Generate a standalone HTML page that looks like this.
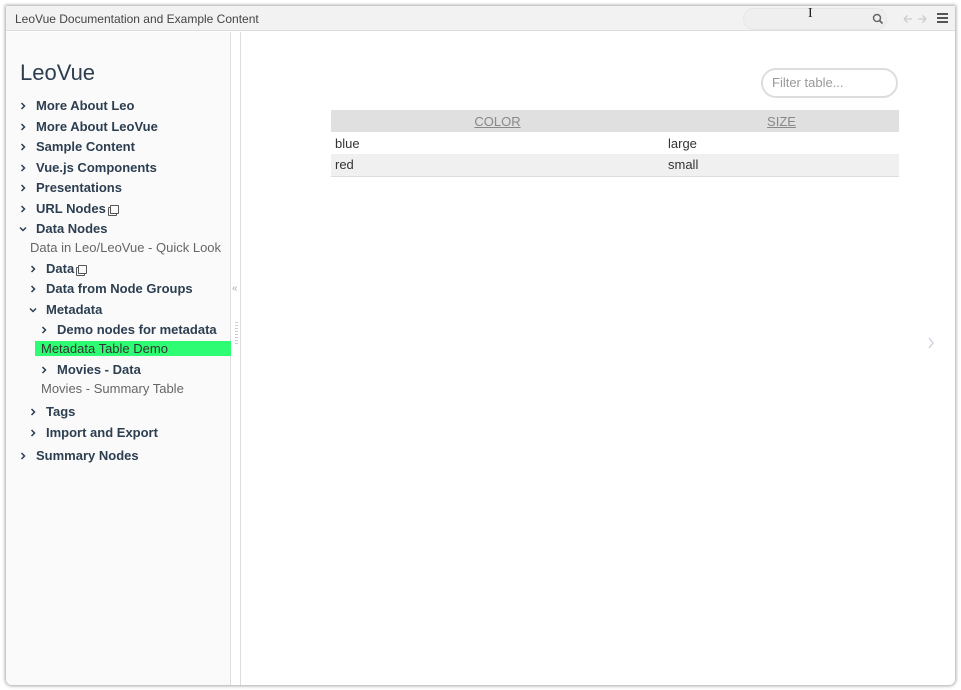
<!DOCTYPE html>
<html><head><meta charset="utf-8"><style>
*{margin:0;padding:0;box-sizing:border-box}
body{width:961px;height:690px;background:#fff;position:relative;overflow:hidden;font-family:"Liberation Sans",sans-serif}
.win{position:absolute;left:6px;top:6px;width:949px;height:679px;background:#fff;border-radius:0 0 6px 6px;box-shadow:0 0 3px 1px rgba(0,0,0,.35);overflow:hidden}
.bar{position:absolute;left:0;top:0;width:949px;height:25px;background:#f2f2f2;border-bottom:1px solid #ddd;font-size:12px;color:#444;line-height:26px;padding-left:9px}
.side{position:absolute;left:0;top:26px;width:225px;height:653px;background:#fafafa;border-right:1px solid #ddd}
.gut{position:absolute;left:226px;top:26px;width:9px;height:653px;border-right:1px solid #ddd;background:#fff}
.it{position:absolute;font-size:13px;color:#2c3e50;font-weight:bold;white-space:nowrap;line-height:16px}
.lf{position:absolute;font-size:13px;color:#666;white-space:nowrap;line-height:16px}
.ch{position:absolute;width:8px;height:8px}
.cp{display:inline-block;width:9px;height:9px;border:1px solid #555;border-radius:1px;margin-left:4px;vertical-align:-1px;box-shadow:-2px 2px 0 -1px #fafafa,-2px 2px 0 0 #555}
table{position:absolute;left:325px;top:104px;width:568px;border-collapse:collapse;font-size:13px;color:#333;border-bottom:1px solid #ddd;table-layout:fixed}
th{background:#e0e0e0;height:22px;font-weight:normal;color:#888;text-decoration:underline;font-size:13px}
td{height:22px;padding-left:4px}
</style></head><body>
<svg width="0" height="0" style="position:absolute"><defs>
<symbol id="r" viewBox="0 0 8 8"><path d="M2.5 1 L5.5 4 L2.5 7" fill="none" stroke="#2c3e50" stroke-width="1.5"/></symbol>
<symbol id="d" viewBox="0 0 8 8"><path d="M1 2.5 L4 5.5 L7 2.5" fill="none" stroke="#2c3e50" stroke-width="1.5"/></symbol>
</defs></svg>
<div class="win">
<div class="bar">LeoVue Documentation and Example Content</div>
<div style="position:absolute;left:737px;top:2px;width:144px;height:22px;border-radius:11px;background:#efefef;border:1px solid #e6e6e6"></div>
<svg style="position:absolute;left:866px;top:7px" width="12" height="12"><circle cx="5" cy="5" r="3.5" fill="none" stroke="#666" stroke-width="1.5"/><line x1="7.5" y1="7.5" x2="10.5" y2="10.5" stroke="#666" stroke-width="1.8"/></svg>
<svg style="position:absolute;left:897px;top:8px" width="26" height="10"><path d="M1 5H9M1 5L4.5 1.5M1 5L4.5 8.5M15 5H23M23 5L19.5 1.5M23 5L19.5 8.5" fill="none" stroke="#ccc" stroke-width="1.3"/></svg>
<svg style="position:absolute;left:931px;top:7px" width="11" height="10"><rect y="0" width="11" height="2" fill="#555"/><rect y="4" width="11" height="2" fill="#555"/><rect y="8" width="11" height="2" fill="#555"/></svg>
<div class="side"></div>
<div class="gut"></div>
<div style="position:absolute;left:226px;top:277px;font-size:10px;color:#aaa">«</div>
<div style="position:absolute;left:229px;top:316px;width:3px;height:22px;background:repeating-linear-gradient(#ccc 0 1px,transparent 1px 3px)"></div>
<div style="position:absolute;left:14px;top:54px;font-size:22px;color:#2c3e50">LeoVue</div>
<svg class="ch" style="left:13px;top:96px"><use href="#r"/></svg><div class="it" style="left:30px;top:92px">More About Leo</div>
<svg class="ch" style="left:13px;top:117px"><use href="#r"/></svg><div class="it" style="left:30px;top:113px">More About LeoVue</div>
<svg class="ch" style="left:13px;top:137px"><use href="#r"/></svg><div class="it" style="left:30px;top:133px">Sample Content</div>
<svg class="ch" style="left:13px;top:158px"><use href="#r"/></svg><div class="it" style="left:30px;top:154px">Vue.js Components</div>
<svg class="ch" style="left:13px;top:178px"><use href="#r"/></svg><div class="it" style="left:30px;top:174px">Presentations</div>
<svg class="ch" style="left:13px;top:199px"><use href="#r"/></svg><div class="it" style="left:30px;top:195px">URL Nodes<span class="cp"></span></div>
<svg class="ch" style="left:13px;top:219px"><use href="#d"/></svg><div class="it" style="left:30px;top:215px">Data Nodes</div>
<div class="lf" style="left:24px;top:234px">Data in Leo/LeoVue - Quick Look</div>
<svg class="ch" style="left:23px;top:259px"><use href="#r"/></svg><div class="it" style="left:40px;top:255px">Data<span class="cp"></span></div>
<svg class="ch" style="left:23px;top:279px"><use href="#r"/></svg><div class="it" style="left:40px;top:275px">Data from Node Groups</div>
<svg class="ch" style="left:23px;top:300px"><use href="#d"/></svg><div class="it" style="left:40px;top:296px">Metadata</div>
<svg class="ch" style="left:34px;top:320px"><use href="#r"/></svg><div class="it" style="left:51px;top:316px">Demo nodes for metadata</div>
<div style="position:absolute;left:29px;top:335px;width:196px;height:15px;background:#2efc72"></div>
<div class="lf" style="left:35px;top:335px;color:#333">Metadata Table Demo</div>
<svg class="ch" style="left:34px;top:360px"><use href="#r"/></svg><div class="it" style="left:51px;top:356px">Movies - Data</div>
<div class="lf" style="left:35px;top:375px">Movies - Summary Table</div>
<svg class="ch" style="left:23px;top:402px"><use href="#r"/></svg><div class="it" style="left:40px;top:398px">Tags</div>
<svg class="ch" style="left:23px;top:423px"><use href="#r"/></svg><div class="it" style="left:40px;top:419px">Import and Export</div>
<svg class="ch" style="left:13px;top:446px"><use href="#r"/></svg><div class="it" style="left:30px;top:442px">Summary Nodes</div>
<div style="position:absolute;left:755px;top:62px;width:137px;height:30px;border:2px solid #ddd;border-radius:15px;font-size:13px;color:#999;line-height:26px;padding-left:9px">Filter table...</div>
<table><colgroup><col style="width:333px"><col></colgroup><tr><th>COLOR</th><th>SIZE</th></tr>
<tr><td>blue</td><td>large</td></tr>
<tr style="background:#f0f0f0"><td>red</td><td>small</td></tr></table>
<svg style="position:absolute;left:921px;top:331px" width="8" height="12"><path d="M2 1L6 6L2 11" fill="none" stroke="#ccd" stroke-width="1.3"/></svg>
</div>
<div style="position:absolute;left:808px;top:6px;font-size:14px;color:#222;font-family:'Liberation Serif',serif">I</div>
</body></html>
